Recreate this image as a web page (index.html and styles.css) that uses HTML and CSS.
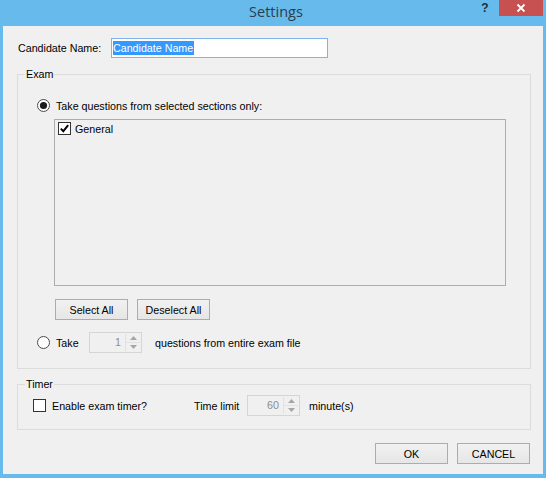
FILE: index.html
```html
<!DOCTYPE html>
<html>
<head>
<meta charset="utf-8">
<title>Settings</title>
<link rel="stylesheet" href="styles.css">
</head>
<body>
<div class="window">
  <div class="titlebar">
    <div class="spacer"></div>
    <div class="title">Settings</div>
    <div class="controls">
      <div class="help">?</div>
      <div class="close">
        <svg width="10" height="10" viewBox="0 0 10 10"><path d="M1.5 1.5 L8.5 8.5 M8.5 1.5 L1.5 8.5" stroke="#fff" stroke-width="1.8" fill="none"/></svg>
      </div>
    </div>
  </div>
  <div class="client">
    <div class="name-row">
      <label class="name-label">Candidate Name:</label>
      <div class="textbox"><span class="sel">Candidate Name</span></div>
    </div>

    <div class="group exam">
      <span class="group-title">Exam</span>
      <div class="opt-row">
        <svg class="radio" width="13" height="13" viewBox="0 0 13 13"><circle cx="6.5" cy="6.5" r="6" fill="#fff" stroke="#4a4a4a"/><circle cx="6.5" cy="6.5" r="3.6" fill="#1c1c1c"/></svg>
        <span class="opt-text">Take questions from selected sections only:</span>
      </div>
      <div class="listbox">
        <div class="list-item">
          <svg class="check" width="13" height="13" viewBox="0 0 13 13"><rect x="0.5" y="0.5" width="12" height="12" fill="#fff" stroke="#333"/><path d="M2.8 6.6 L5.3 9.2 L10.2 3.2" stroke="#000" stroke-width="1.9" fill="none"/></svg>
          <span>General</span>
        </div>
      </div>
      <div class="btn-row">
        <button class="btn">Select All</button>
        <button class="btn">Deselect All</button>
      </div>
      <div class="opt-row opt-row2">
        <svg class="radio" width="13" height="13" viewBox="0 0 13 13"><circle cx="6.5" cy="6.5" r="6" fill="#fff" stroke="#4a4a4a"/></svg>
        <span class="opt-text take">Take</span>
        <div class="spin">
          <span class="spin-val">1</span>
          <div class="spin-btns">
            <div class="spin-up"><svg width="7" height="4" viewBox="0 0 7 4"><path d="M0 4 L3.5 0 L7 4 Z" fill="#a6a6a6"/></svg></div>
            <div class="spin-down"><svg width="7" height="4" viewBox="0 0 7 4"><path d="M0 0 L3.5 4 L7 0 Z" fill="#a6a6a6"/></svg></div>
          </div>
        </div>
        <span class="after-spin">questions from entire exam file</span>
      </div>
    </div>

    <div class="group timer">
      <span class="group-title">Timer</span>
      <div class="timer-row">
        <div class="timer-enable">
          <svg class="check" width="13" height="13" viewBox="0 0 13 13"><rect x="0.5" y="0.5" width="12" height="12" fill="#fff" stroke="#333"/></svg>
          <span>Enable exam timer?</span>
        </div>
        <span class="time-label">Time limit</span>
        <div class="spin">
          <span class="spin-val">60</span>
          <div class="spin-btns">
            <div class="spin-up"><svg width="7" height="4" viewBox="0 0 7 4"><path d="M0 4 L3.5 0 L7 4 Z" fill="#a6a6a6"/></svg></div>
            <div class="spin-down"><svg width="7" height="4" viewBox="0 0 7 4"><path d="M0 0 L3.5 4 L7 0 Z" fill="#a6a6a6"/></svg></div>
          </div>
        </div>
        <span class="after-spin minutes">minute(s)</span>
      </div>
    </div>

    <div class="dialog-buttons">
      <button class="btn">OK</button>
      <button class="btn">CANCEL</button>
    </div>
  </div>
</div>
</body>
</html>
```

FILE: styles.css
```css
* { box-sizing: border-box; }

html, body {
  margin: 0;
  padding: 0;
  background: #66bbec;
}

body {
  font-family: "Liberation Sans", Arial, sans-serif;
  font-size: 10.7px;
  color: #000;
}

.window {
  width: 546px;
  height: 478px;
  background: #66bbec;
  padding: 0 3px 4px 3px;
  display: flex;
  flex-direction: column;
}

.titlebar {
  height: 26px;
  display: grid;
  grid-template-columns: 1fr auto 1fr;
  align-items: start;
  flex: none;
}

.title {
  font-family: "Open Sans", "Noto Sans", sans-serif;
  font-size: 14.5px;
  color: #2c3e4c;
  line-height: 23px;
  padding-left: 6px;
}

.controls {
  justify-self: end;
  display: flex;
}

.help {
  width: 28px;
  height: 16px;
  text-align: center;
  font-family: "Liberation Sans", Arial, sans-serif;
  font-weight: bold;
  font-size: 12px;
  line-height: 16px;
  color: #1f2f3d;
}

.close {
  width: 44px;
  height: 16px;
  background: #c75050;
  display: flex;
  align-items: center;
  justify-content: center;
}

.close svg { display: block; }

.client {
  flex: 1;
  background: #f0f0f0;
  padding-top: 12px;
  display: flex;
  flex-direction: column;
}

.name-row {
  display: flex;
  align-items: center;
  height: 20px;
  margin-left: 15px;
}

.name-label {
  width: 93px;
}

.textbox {
  width: 217px;
  height: 20px;
  border: 1px solid #7eb4ea;
  background: #fff;
  padding-left: 1px;
  display: flex;
  align-items: center;
}

.sel {
  background: #3399ff;
  color: #fff;
  line-height: 14px;
  padding-right: 1px;
}

.group {
  position: relative;
  border: 1px solid #dcdcdc;
  margin: 16px 12px 0 14px;
}

.group-title {
  position: absolute;
  top: -7px;
  left: 7px;
  padding: 0 1px;
  line-height: 13px;
  background: #f0f0f0;
}

.exam {
  padding: 24px 0 15px 0;
}

.opt-row {
  display: flex;
  align-items: center;
  height: 13px;
}

.radio {
  display: block;
  flex: none;
  margin-left: 19px;
}

.opt-text {
  margin-left: 6px;
}

.listbox {
  margin: 7px 0 0 36px;
  width: 452px;
  height: 167px;
  border: 1px solid #adadad;
  background: #f0f0f0;
  padding: 2px 3px;
}

.list-item {
  display: flex;
  align-items: center;
  height: 13px;
}

.check {
  display: block;
  flex: none;
}

.list-item span {
  margin-left: 4px;
}

.btn-row {
  display: flex;
  gap: 9px;
  margin: 13px 0 0 37px;
}

.btn {
  width: 73px;
  height: 21px;
  padding: 0;
  margin: 0;
  border: 1px solid #acacac;
  background: linear-gradient(#f1f1f1, #e6e6e6);
  font-family: "Liberation Sans", Arial, sans-serif;
  font-size: 10.7px;
  color: #000;
}

.opt-row2 {
  margin-top: 12px;
  height: 21px;
}

.take {
  width: 33px;
  flex: none;
}

.spin {
  width: 53px;
  height: 21px;
  border: 1px solid #d5d5d5;
  background: #f0f0f0;
  display: flex;
  flex: none;
}

.spin-val {
  flex: 1;
  text-align: right;
  color: #8c8c8c;
  line-height: 19px;
  padding-right: 4px;
}

.spin-btns {
  width: 15px;
  margin: 1px 1px 1px 0;
  border-left: 1px solid #e2e2e2;
  display: flex;
  flex-direction: column;
}

.spin-up, .spin-down {
  flex: 1;
  display: flex;
  align-items: center;
  justify-content: center;
}

.spin-up {
  border-bottom: 1px solid #e2e2e2;
}

.spin-btns svg { display: block; }

.after-spin {
  margin-left: 13px;
}

.timer {
  margin-top: 15px;
  padding: 10px 0 13px 0;
}

.timer-row {
  display: flex;
  align-items: center;
  height: 21px;
}

.timer-enable {
  display: flex;
  align-items: center;
  gap: 6px;
  width: 161px;
  margin-left: 15px;
  flex: none;
}

.time-label {
  width: 53px;
  flex: none;
}

.minutes {
  margin-left: 9px;
}

.dialog-buttons {
  display: flex;
  justify-content: flex-end;
  gap: 9px;
  margin: 13px 13px 0 0;
}
```
